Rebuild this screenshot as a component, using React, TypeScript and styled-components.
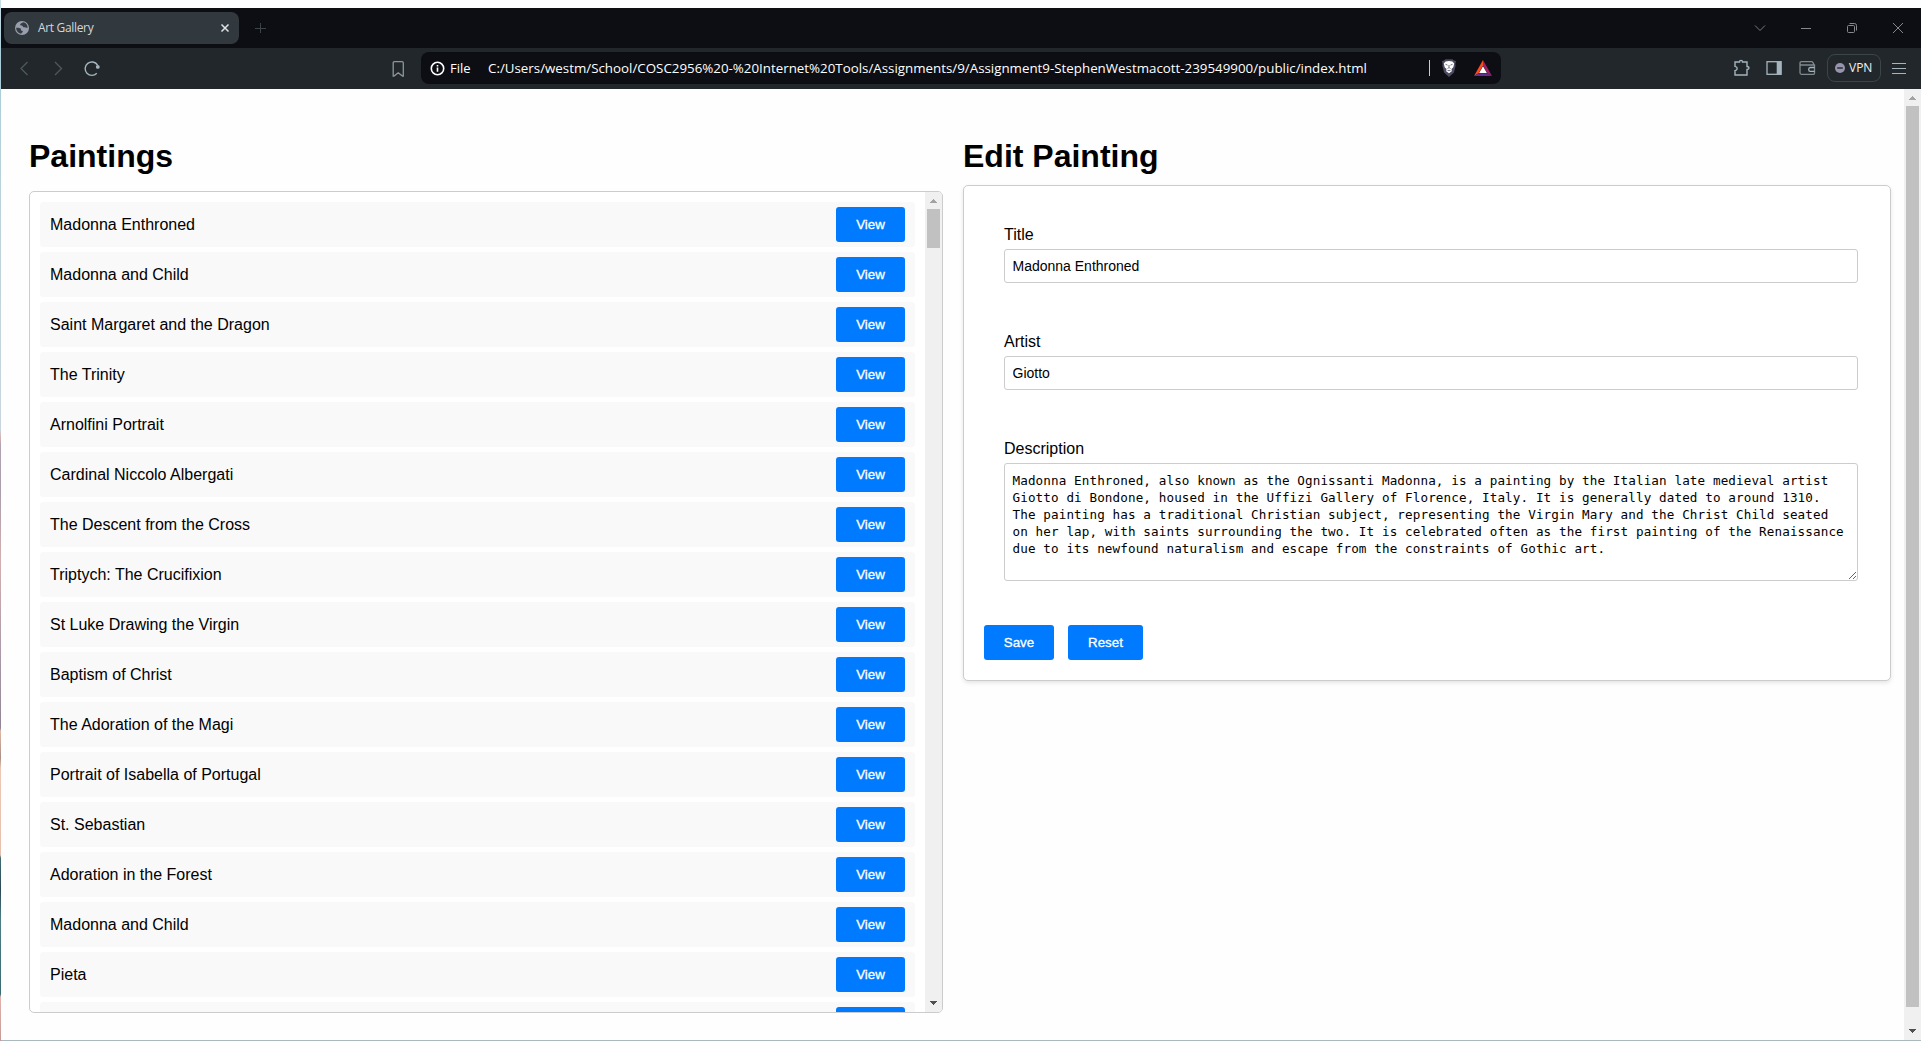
import React from "react";
import styled, { createGlobalStyle } from "styled-components";

const GlobalStyle = createGlobalStyle`
  * { box-sizing: border-box; }
  html, body { margin: 0; padding: 0; background: #fff; }
  body { font-family: Arial, "Liberation Sans", sans-serif; font-size: 16px; color: #000; overflow: hidden; }
`;

const ui = `"Segoe UI", "Open Sans", "Noto Sans", sans-serif`;

const Desktop = styled.div`
  display: flex;
  width: 1921px;
  height: 1041px;
  overflow: hidden;
  background: #fdfeff;
`;

const WallpaperEdge = styled.div`
  flex: none;
  width: 1px;
  background: linear-gradient(
    to bottom,
    #c9dde6 0, #a9cdd8 60px, #bcd2da 200px, #c8d5de 430px, #d8b8b4 436px,
    #b0a3b2 445px, #a99dac 490px, #d2b0b0 560px, #a898a8 660px, #8f8594 728px,
    #e0b8a4 731px, #a98f88 758px, #edc8b4 768px, #e6bfae 855px, #3f6d73 858px,
    #2c4756 890px, #4a7f85 920px, #3c6a72 994px, #e0b4ac 997px, #c49a96 1041px
  );
`;

const Window = styled.div`
  flex: 1;
  min-width: 0;
  display: flex;
  flex-direction: column;
  padding-top: 8px;
  border-bottom: 1px solid #a9b9be;
`;

const TabBar = styled.div`
  flex: none;
  display: flex;
  align-items: center;
  height: 40px;
  padding-left: 3px;
  background: #0d0e13;
`;

const Tab = styled.div`
  display: flex;
  align-items: center;
  width: 235px;
  height: 32px;
  padding: 0 9px 0 11px;
  border-radius: 8px;
  background: #32393e;
`;

const TabTitle = styled.span`
  flex: 1;
  margin-left: 9px;
  font: 12px/16px ${ui};
  letter-spacing: -0.33px;
  color: #d4d7d9;
`;

const NewTab = styled.div`
  display: flex;
  margin-left: 15px;
`;

const WindowControls = styled.div`
  display: flex;
  margin-left: auto;

  svg { margin-right: 30px; }
  svg:last-child { margin-right: 15px; }
`;

const Toolbar = styled.div`
  flex: none;
  display: flex;
  align-items: center;
  height: 41px;
  background: #22272b;
`;

const Icon = styled.svg<{ $left?: number }>`
  flex: none;
  margin-left: ${(p) => p.$left ?? 0}px;
`;

const NavIcons = styled.div`
  display: flex;
  align-items: center;
  width: 390px;
  padding-left: 15px;
  gap: 18px;
`;

const AddressBar = styled.div`
  display: flex;
  align-items: center;
  width: 1080px;
  height: 32px;
  margin: 0 0 1px 14px;
  padding-left: 9px;
  border-radius: 8px;
  background: #0d0e13;
  color: #fff;
  font: 13px/18px ${ui};
  white-space: nowrap;
`;

const Scheme = styled.span`
  width: 38px;
  margin-left: 5px;
`;

const Url = styled.span`
  width: 941px;
  font-size: 13.33px;
`;

const Divider = styled.span`
  width: 1px;
  height: 16px;
  margin-right: 10px;
  background: #c9cbce;
`;

const Extensions = styled.div`
  display: flex;
  align-items: center;
  margin: 0 15px 1px auto;
`;

const VpnButton = styled.div`
  display: flex;
  align-items: center;
  gap: 4px;
  width: 54px;
  height: 28px;
  margin: 0 11px;
  padding-left: 7px;
  border: 1px solid #3b454a;
  border-radius: 8px;
  color: #f0f2f3;
  font: 12px/16px ${ui};
`;

const Viewport = styled.div`
  flex: 1;
  min-height: 0;
  display: flex;
  background: #fefefe;
`;

const Page = styled.main`
  flex: 1;
  display: flex;
  align-items: flex-start;
  gap: 20px;
  padding: 48px 13px 0 28px;
`;

const ListColumn = styled.section`
  width: 914px;
`;

const EditColumn = styled.section`
  width: 928px;
`;

const Heading = styled.h1<{ $gap: number }>`
  margin: 0 0 ${(p) => p.$gap}px;
  font-size: 32px;
  line-height: 38px;
  font-weight: bold;
`;

const ListBox = styled.div`
  display: flex;
  height: 822px;
  border: 1px solid #ccc;
  border-radius: 5px;
  overflow: hidden;
  background: #fff;
`;

const Items = styled.ul`
  flex: 1;
  display: flex;
  flex-direction: column;
  gap: 5px;
  margin: 0;
  padding: 10px;
  list-style: none;
`;

const Item = styled.li`
  flex: none;
  display: flex;
  align-items: center;
  justify-content: space-between;
  height: 45px;
  padding: 0 10px;
  border-radius: 3px;
  background: #f9f9f9;
`;

const Button = styled.button<{ $width: number }>`
  width: ${(p) => p.$width}px;
  height: 35px;
  padding: 0;
  border: none;
  border-radius: 3px;
  background: #007bff;
  color: #fff;
  font: 13.333px Arial, "Liberation Sans", sans-serif;
  -webkit-text-stroke: 0.3px #fff;
`;

const Track = styled.div`
  flex: none;
  display: flex;
  flex-direction: column;
  align-items: center;
  width: 17px;
  background: #f0f0f0;
`;

const ArrowBox = styled.div<{ $down?: boolean }>`
  display: flex;
  justify-content: center;
  width: 17px;
  height: 17px;
  padding-top: ${(p) => (p.$down ? 6 : 7)}px;
  margin-top: ${(p) => (p.$down ? "auto" : "0")};
`;

const Thumb = styled.div<{ $height: number }>`
  width: 13px;
  height: ${(p) => p.$height}px;
  background: #c1c1c1;
`;

const Card = styled.form`
  height: 496px;
  padding: 20px;
  border: 1px solid #ccc;
  border-radius: 5px;
  background: #fff;
  box-shadow: 0 2px 4px rgba(0, 0, 0, 0.1);
`;

const Field = styled.label`
  display: flex;
  flex-direction: column;
  gap: 4px;
  width: 854px;
  margin: 0 0 49px 20px;
  line-height: 20px;

  &:first-child { padding-top: 19px; }
`;

const TextInput = styled.input`
  height: 34px;
  padding: 0 7.5px;
  border: 1px solid #ccc;
  border-radius: 3px;
  outline: none;
  background: #fff;
  color: #000;
  font: 14px Arial, "Liberation Sans", sans-serif;
`;

const TextArea = styled.textarea`
  height: 118px;
  padding: 8px 7.5px;
  border: 1px solid #ccc;
  border-radius: 3px;
  outline: none;
  background: #fff;
  color: #000;
  font: 12.6px/17px Consolas, "DejaVu Sans Mono", monospace;
  letter-spacing: 0.115px;
  white-space: pre;
  overflow: hidden;
`;

const Actions = styled.div`
  display: flex;
  gap: 14px;
  margin-top: -5px;
`;

const paintings = [
  "Madonna Enthroned",
  "Madonna and Child",
  "Saint Margaret and the Dragon",
  "The Trinity",
  "Arnolfini Portrait",
  "Cardinal Niccolo Albergati",
  "The Descent from the Cross",
  "Triptych: The Crucifixion",
  "St Luke Drawing the Virgin",
  "Baptism of Christ",
  "The Adoration of the Magi",
  "Portrait of Isabella of Portugal",
  "St. Sebastian",
  "Adoration in the Forest",
  "Madonna and Child",
  "Pieta",
  "",
];

const description = [
  "Madonna Enthroned, also known as the Ognissanti Madonna, is a painting by the Italian late medieval artist",
  "Giotto di Bondone, housed in the Uffizi Gallery of Florence, Italy. It is generally dated to around 1310.",
  "The painting has a traditional Christian subject, representing the Virgin Mary and the Christ Child seated",
  "on her lap, with saints surrounding the two. It is celebrated often as the first painting of the Renaissance",
  "due to its newfound naturalism and escape from the constraints of Gothic art.",
].join("\n");

function ScrollBar({ thumb }: { thumb: number }) {
  return (
    <Track>
      <ArrowBox>
        <svg width="7" height="4" viewBox="0 0 7 4" shapeRendering="crispEdges">
          <path d="M3 0h1v1h1v1h1v1h1v1H0V3h1V2h1V1h1z" fill="#a3a3a3" />
        </svg>
      </ArrowBox>
      <Thumb $height={thumb} />
      <ArrowBox $down>
        <svg width="7" height="4" viewBox="0 0 7 4" shapeRendering="crispEdges">
          <path d="M0 0h7v1H6v1H5v1H4v1H3V3H2V2H1V1H0z" fill="#505050" />
        </svg>
      </ArrowBox>
    </Track>
  );
}

function BrowserTabs() {
  return (
    <TabBar>
      <Tab>
        <svg width="14" height="14" viewBox="0 0 14 14">
          <circle cx="7" cy="7" r="7" fill="#9a9fae" />
          <path
            d="M8 1.3C7 2.4 5.4 2.2 5.2 3.6c-.1 1 1 1 1.9 1.1 1 .1.5 1.3 1.6 1.5 1.5.2 2.3.5 3.9.6C12.8 3.8 10.5 1.5 8 1.3zM1.2 6.7c1.6 0 3.6-.1 4.500.9.7.9-.3 1.6.6 2 1 .4 1.9.5 1.4 1.5-.4.7-1.2.6-1.5 1.6C3.3 12.3 1.2 10 1.2 6.7z"
            fill="#353c43"
          />
        </svg>
        <TabTitle>Art Gallery</TabTitle>
        <svg width="10" height="10" viewBox="0 0 10 10">
          <path d="M1.5 1.5l7 7M8.5 1.5l-7 7" stroke="#e0e3e5" strokeWidth="1.5" />
        </svg>
      </Tab>
      <NewTab>
        <svg width="12" height="12" viewBox="0 0 12 12">
          <path d="M6.5 1v10M1 6.5h11" stroke="#3c4349" />
        </svg>
      </NewTab>
      <WindowControls>
        <svg width="16" height="12" viewBox="0 0 16 12" fill="none" stroke="#777a80">
          <path d="M3 3.5l5 5 5-5" />
        </svg>
        <svg width="16" height="12" viewBox="0 0 16 12" fill="none" stroke="#85888d">
          <path d="M3 6.5h10" />
        </svg>
        <svg width="16" height="12" viewBox="0 0 16 12" fill="none" stroke="#85888d">
          <rect x="3.5" y="3.5" width="7" height="7" rx="1" />
          <path d="M5.5 1.5h5q2 0 2 2v5" />
        </svg>
        <svg width="16" height="12" viewBox="0 0 16 12" fill="none" stroke="#85888d">
          <path d="M3 1l10 10M13 1L3 11" />
        </svg>
      </WindowControls>
    </TabBar>
  );
}

function BrowserToolbar() {
  return (
    <Toolbar>
      <NavIcons>
        <Icon width="16" height="16" viewBox="0 0 16 16" fill="none" stroke="#4f585d" strokeWidth="1.3">
          <path d="M11.5 1L5 7.5l6.5 6.5" />
        </Icon>
        <Icon width="16" height="16" viewBox="0 0 16 16" fill="none" stroke="#4f585d" strokeWidth="1.3">
          <path d="M5 1L11.5 7.5 5 14" />
        </Icon>
        <Icon width="16" height="16" viewBox="0 0 16 16" fill="none">
          <path d="M12.8 12.2A6.7 6.7 0 1 1 13.5 4" stroke="#a5b5bd" strokeWidth="1.4" />
          <circle cx="13.8" cy="5.9" r="1.9" fill="#a5b5bd" />
        </Icon>
      </NavIcons>
      <Icon width="16" height="16" viewBox="0 0 16 16" fill="none" stroke="#8b979d" strokeWidth="1.3">
        <path d="M2.2 2q0-1.3 1.3-1.3h7.5q1.3 0 1.3 1.3v13H11.5L7.2 11.8 3 15H2.2z" />
      </Icon>
      <AddressBar>
        <Icon width="15" height="15" viewBox="0 0 15 15" fill="none">
          <circle cx="7.5" cy="7.5" r="6.2" stroke="#fff" strokeWidth="1.6" />
          <path d="M7.5 6.6v4.2M7.5 3.9v1.7" stroke="#fff" strokeWidth="1.6" />
        </Icon>
        <Scheme>File</Scheme>
        <Url>
          C:/Users/westm/School/COSC2956%20-%20Internet%20Tools/Assignments/9/Assignment9-StephenWestmacott-239549900/public/index.html
        </Url>
        <Divider />
        <Icon width="18" height="20" viewBox="0 0 18 20">
          <path d="M5.5 1.2h7l1.3 1.3 2.2.6-.6 2.7.2 2.2-1.7 6.6L9 19l-4.9-4.400L2.4 8l.2-2.2L2 3.1l2.2-.6z" fill="#4c4b61" />
          <path d="M5.6 3.6L9 3l3.4.6 1.8 2-.9 3.6-1.8 1.9.3 2.2L9 15.3l-2.8-2 .3-2.2-1.8-1.9-.9-3.6z" fill="#fff" />
          <path d="M5.5 6.3l2 .8M12.5 6.3l-2 .8M9 7v2M7.5 10.5L9 9.5l1.5 1M7.5 12.6h3" stroke="#4c4b61" strokeWidth=".8" fill="none" />
        </Icon>
        <Icon $left={16} width="18" height="16" viewBox="0 0 18 16">
          <path d="M9 0L0 16l4.6-2.7L9 5.6z" fill="#ff4a1c" />
          <path d="M9 0l9 16-4.6-2.7L9 5.6z" fill="#9e1f63" />
          <path d="M0 16h18l-4.6-2.7H4.6z" fill="#662d91" />
          <path d="M9 6.3l3.9 6.6H5.1z" fill="#fff" />
        </Icon>
      </AddressBar>
      <Extensions>
        <Icon width="18" height="18" viewBox="0 0 18 18" fill="none" stroke="#a5b5bd" strokeWidth="1.4">
          <path d="M2 3h4.5q0-1.6 1.5-1.6T9.5 3H14v4.5q2 .1 2 1.5t-2 1.5V16H2v-4.3q2.2-.4 2.2-2.1T2 7.4z" />
        </Icon>
        <Icon $left={15} width="16" height="16" viewBox="0 0 16 16" fill="none">
          <rect x="1" y="1.7" width="14" height="12.6" stroke="#a5b5bd" strokeWidth="1.3" />
          <path d="M10.7 1.3h4.8v13.4h-4.8z" fill="#a5b5bd" />
        </Icon>
        <Icon $left={17} width="17" height="16" viewBox="0 0 17 16" fill="none" stroke="#7f8b91" strokeWidth="1.3">
          <path d="M14.5 5V3.2L13 1.6H2.5q-1.5 0-1.5 1.5v9.7q0 1.5 1.5 1.5h12q1 0 1-1V5H2.5Q1 5 1 3.2" />
          <path d="M15.5 7.5h-4.2q-1.6 0-1.6 1.9t1.6 1.9h4.2" stroke="#a5b5bd" />
        </Icon>
        <VpnButton>
          <Icon width="10" height="10" viewBox="0 0 10 10">
            <circle cx="5" cy="5" r="5" fill="#9695ad" />
            <path d="M2.2 5h5.6" stroke="#22272b" strokeWidth="1.4" />
          </Icon>
          VPN
        </VpnButton>
        <Icon width="14" height="12" viewBox="0 0 14 12" stroke="#a5b5bd">
          <path d="M0 1.5h14M0 6.5h14M0 11.5h14" />
        </Icon>
      </Extensions>
    </Toolbar>
  );
}

export default function App() {
  return (
    <>
      <GlobalStyle />
      <Desktop>
        <WallpaperEdge />
        <Window>
          <BrowserTabs />
          <BrowserToolbar />
          <Viewport>
            <Page>
              <ListColumn>
                <Heading $gap={16}>Paintings</Heading>
                <ListBox>
                  <Items>
                    {paintings.map((title, i) => (
                      <Item key={i}>
                        <span>{title}</span>
                        <Button $width={69}>{title && "View"}</Button>
                      </Item>
                    ))}
                  </Items>
                  <ScrollBar thumb={39} />
                </ListBox>
              </ListColumn>
              <EditColumn>
                <Heading $gap={10}>Edit Painting</Heading>
                <Card>
                  <Field>
                    Title
                    <TextInput defaultValue="Madonna Enthroned" />
                  </Field>
                  <Field>
                    Artist
                    <TextInput defaultValue="Giotto" />
                  </Field>
                  <Field>
                    Description
                    <TextArea defaultValue={description} spellCheck={false} />
                  </Field>
                  <Actions>
                    <Button type="button" $width={70}>Save</Button>
                    <Button type="button" $width={75}>Reset</Button>
                  </Actions>
                </Card>
              </EditColumn>
            </Page>
            <ScrollBar thumb={901} />
          </Viewport>
        </Window>
      </Desktop>
    </>
  );
}
